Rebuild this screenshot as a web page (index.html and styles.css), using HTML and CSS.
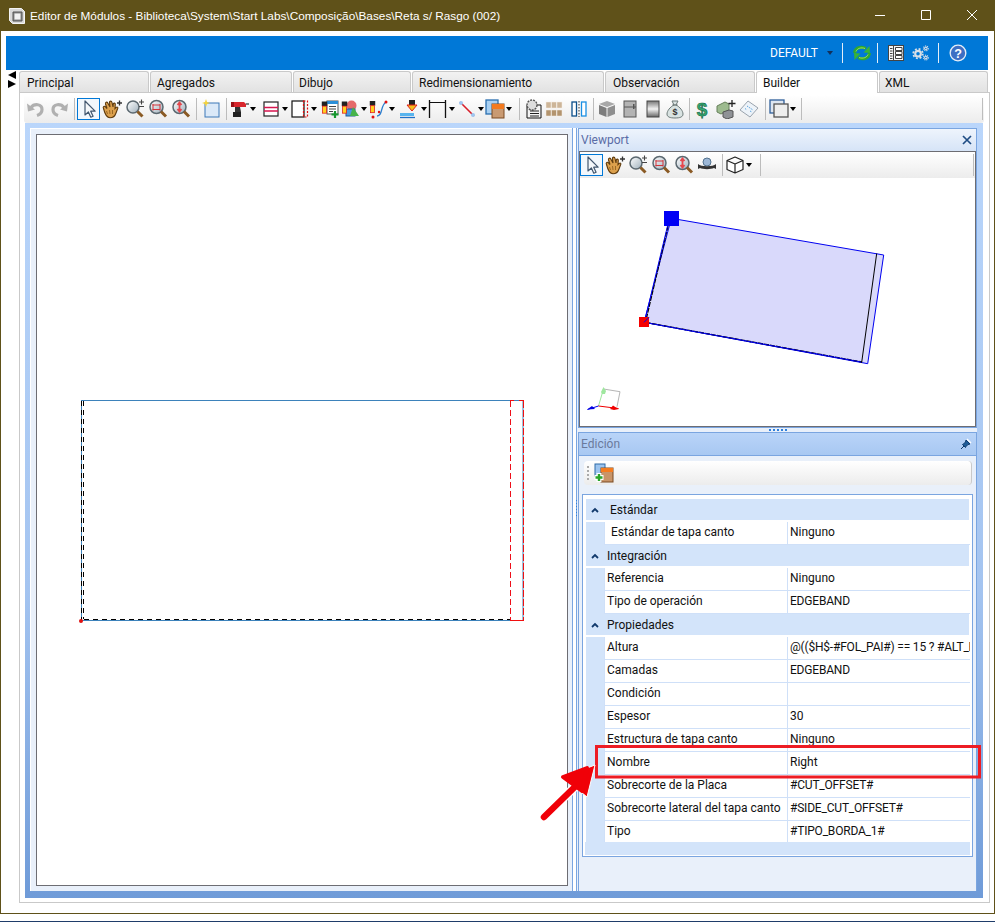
FILE: index.html
```html
<!DOCTYPE html>
<html lang="es">
<head>
<meta charset="utf-8">
<title>Editor de Módulos</title>
<link rel="stylesheet" href="styles.css">
</head>
<body>
<svg class="defs" width="0" height="0">
  <defs>
    <linearGradient id="lens" x1="0" y1="0" x2="1" y2="1"><stop offset="0" stop-color="#fff"/><stop offset="1" stop-color="#9fb0bc"/></linearGradient>
    <symbol id="cursor" viewBox="0 0 20 20"><path d="M6 2v14l3.400-3 2.400 5.200 2.300-1-2.400-5h4.400z" fill="#f4f7fa" stroke="#41566e" stroke-width="1.200" stroke-linejoin="round"/></symbol>
    <symbol id="hand" viewBox="0 0 20 20"><path d="M1.500 9.500c-1-2 1-3 2-1.500l1.500 1.500-1.500-4.500c-.5-2 1.500-2.500 2.300-1L8 8 7.500 3.500c0-1.800 2.200-1.800 2.500 0L11 8l.3-3c.3-1.500 2.200-1 2 .5l-.3 4 1-1c1.500-1 2.500 0 1.500 1.500l-1.500 4c-1 3-3 4.800-6 4.800-3.500 0-5-3.300-6.500-9.300z" fill="#dca04c" stroke="#5e3a0c" stroke-width="1.100"/><path d="M4.500 12l1 3M7.500 11l.5 4M10.500 11l0 4" stroke="#8a5a1c" stroke-width=".8"/><path d="M15 4h5M17.500 1.500v5" stroke="#333" stroke-width="1.300"/></symbol>
    <symbol id="zplus" viewBox="0 0 20 20"><circle cx="8" cy="8" r="6" fill="url(#lens)" stroke="#5b6870" stroke-width="1.500"/><path d="M12.500 12.500l5 5" stroke="#8a5a24" stroke-width="3"/><path d="M14 3h5M16.500.5v5M14 7.500h5" stroke="#444" stroke-width="1.100"/></symbol>
    <symbol id="zwin" viewBox="0 0 20 20"><circle cx="8.500" cy="8" r="6.500" fill="url(#lens)" stroke="#5b6870" stroke-width="1.500"/><path d="M13 12.500l5 5" stroke="#8a5a24" stroke-width="3"/><path d="M4.500 6h7.500M4.500 10.500h7.500M5 5v6.500M12 5v6.500" stroke="#d2353a" stroke-width="1"/></symbol>
    <symbol id="zext" viewBox="0 0 20 20"><circle cx="8.500" cy="8" r="6.500" fill="url(#lens)" stroke="#5b6870" stroke-width="1.500"/><path d="M13 12.500l5 5" stroke="#8a5a24" stroke-width="3"/><path d="M8.500 3.500v9M6.500 6l2-2.500 2 2.500M6.500 10l2 2.500 2-2.500" fill="none" stroke="#e5484d" stroke-width="1.800"/></symbol>
    <symbol id="undo" viewBox="0 0 20 20"><path d="M5 8.500c3-4 11-4 11 2 0 3-2 5-5 6" fill="none" stroke="#b0b0b0" stroke-width="3.200"/><path d="M1 4.500l1 8 7-2z" fill="#b0b0b0"/></symbol>
    <symbol id="orbit" viewBox="0 0 20 20"><circle cx="10" cy="7" r="4" fill="#9cb7d6" stroke="#53728f"/><path d="M1 9c3 3 15 3 18 0v5l-2-1c-3 1.500-11 1.500-14 0l-2 1z" fill="#333"/></symbol>
    <symbol id="cube" viewBox="0 0 20 20"><path d="M10 2l8 3.500v9L10 18l-8-3.500v-9zM2 5.500L10 9l8-3.500M10 9v9" fill="#fff" stroke="#222" stroke-width="1.200" stroke-linejoin="round"/></symbol>
    <symbol id="head" viewBox="0 0 9 18"><rect x="1" y="0" width="7" height="6" fill="#222"/><rect x="2" y="6" width="5" height="9" fill="#ffd21f" stroke="#e21b1b"/></symbol>
    <symbol id="addwin" viewBox="0 0 20 20"><rect x="1" y="1" width="10" height="12" fill="#9cc4ef" stroke="#2d6aa8"/><rect x="7" y="5" width="12" height="14" fill="#c89468" stroke="#7a4a22"/><rect x="7" y="5" width="12" height="4" fill="#f47c20"/><path d="M5 10v9M.500 14.500h9" stroke="#fff" stroke-width="5"/><path d="M5 11v7M1.500 14.500h7" stroke="#2aa52a" stroke-width="2.400"/></symbol>
  </defs>
</svg>

<div class="win">
  <header class="titlebar">
    <svg class="appicon" viewBox="0 0 16 16"><path d="M.5.500h12l3 3v12h-12l-3-3z" fill="#d9d9d9" stroke="#f4f4f4"/><path d="M4 4h9v9H4z" fill="#8a8a8a" stroke="#555"/><path d="M5.500 5.500h6v6h-6z" fill="#f2f2f2"/></svg>
    <span class="title">Editor de Módulos - Biblioteca\System\Start Labs\Composição\Bases\Reta s/ Rasgo (002)</span>
    <div class="wincontrols">
      <svg class="wc" viewBox="0 0 46 31"><path d="M18 15.500h10" stroke="#fff"/></svg>
      <svg class="wc" viewBox="0 0 46 31"><path d="M18.500 10.500h9v9h-9z" fill="none" stroke="#fff"/></svg>
      <svg class="wc" viewBox="0 0 46 31"><path d="M18 10l10 10M28 10L18 20" stroke="#fff"/></svg>
    </div>
  </header>

  <div class="body">
    <div class="ribbon">
      <span class="profile">DEFAULT</span><span class="caret dark"></span>
      <span class="rsep first"></span>
      <svg class="ri refresh" viewBox="0 0 20 18"><path d="M2.500 9C3 4 9 1.500 14 4.500" fill="none" stroke="#2fa82f" stroke-width="3"/><path d="M11.500 8.500L18 9l-.5-7z" fill="#37b437"/><path d="M17.500 9c-.5 5-6.500 7.500-11.500 4.500" fill="none" stroke="#2fa82f" stroke-width="3"/><path d="M8.500 9.500L2 9l.5 7z" fill="#37b437"/><path d="M4 7.500C5 4.500 9 3 13 4.500M16 10.500c-1 3-5 4.500-9 3" fill="none" stroke="#b9ec6a" stroke-width=".8"/></svg>
      <span class="rsep"></span>
      <svg class="ri list" viewBox="0 0 16 16"><rect x=".5" y=".5" width="15" height="15" fill="#f6f6f6" stroke="#444"/><path d="M5.500 1v14" stroke="#444"/><path d="M7.500 2.500h6.500v3H7.500zM7.500 6.500h6.500v3H7.500zM7.500 10.500h6.500v3H7.500z" fill="#fff" stroke="#444"/><path d="M2 3.500h2.500M2 6h2.500M2 8.500h2.500M2 11h2.500M2 13.500h2.500" stroke="#444"/></svg>
      <svg class="ri gear" viewBox="0 0 24 22"><g fill="none" stroke="#d9dfe7"><circle cx="8.500" cy="12" r="4" stroke-width="3"/><circle cx="8.500" cy="12" r="6.800" stroke-width="2.400" stroke-dasharray="2.700 2.650"/><circle cx="19.500" cy="4.500" r="1.800" stroke-width="1.500"/><circle cx="19.500" cy="4.500" r="3.400" stroke-width="1.500" stroke-dasharray="1.500 1.170"/><circle cx="19.500" cy="17.500" r="1.800" stroke-width="1.500"/><circle cx="19.500" cy="17.500" r="3.400" stroke-width="1.500" stroke-dasharray="1.500 1.170"/></g></svg>
      <span class="rsep"></span>
      <svg class="ri help" viewBox="0 0 20 20"><circle cx="10" cy="10" r="8.700" fill="#3d6fc4" stroke="#e6eef8" stroke-width="1.500"/><text x="10" y="15" class="qm">?</text></svg>
    </div>

    <div class="tabrow">
      <div class="tabnav"><span class="tri left"></span><span class="tri right"></span></div>
      <div class="tab t1">Principal</div>
      <div class="tab t2">Agregados</div>
      <div class="tab t3">Dibujo</div>
      <div class="tab t4">Redimensionamiento</div>
      <div class="tab t5">Observación</div>
      <div class="tab t6 active">Builder</div>
      <div class="tab t7">XML</div>
    </div>

    <div class="panel">
      <div class="toolbar main">
        <span class="b"><svg class="i"><use href="#undo"/></svg></span>
        <span class="b"><svg class="i flip"><use href="#undo"/></svg></span>
        <span class="sep s3"></span>
        <span class="b sel"><svg class="i"><use href="#cursor"/></svg></span>
        <span class="b"><svg class="i"><use href="#hand"/></svg></span>
        <span class="b"><svg class="i"><use href="#zplus"/></svg></span>
        <span class="b"><svg class="i"><use href="#zwin"/></svg></span>
        <span class="b"><svg class="i"><use href="#zext"/></svg></span>
        <span class="sep s3"></span>
        <span class="b"><svg class="i" viewBox="0 0 20 20"><rect x="4" y="4" width="14" height="14" fill="#dbe9f8" stroke="#3d78b8"/><path d="M5 0l1 3 3 1-3 1-1 3-1-3-3-1 3-1z" fill="#f5d33b"/></svg></span>
        <span class="sep s3"></span>

        <span class="d w32"><svg class="i" viewBox="0 0 20 20"><path d="M2 3h13l2 2v3H2z" fill="#d8262c"/><path d="M6 8h5l1 5H6z" fill="#333"/><rect x="4" y="13" width="8" height="5" fill="#222"/><path d="M17 5h3" stroke="#555" stroke-width="1.500"/><rect x="2" y="3" width="3" height="5" fill="#9a1015"/></svg><span class="caret"></span></span>
        <span class="d w29"><svg class="i" viewBox="0 0 20 20"><rect x="3" y="3" width="14" height="14" fill="#fff" stroke="#222" stroke-width="1.200"/><path d="M3 8.500h14M3 12h14" stroke="#d8164f" stroke-width="1.300"/></svg><span class="caret"></span></span>
        <span class="d w30"><svg class="i" viewBox="0 0 20 20"><rect x="2" y="2" width="12" height="16" fill="#fff" stroke="#111" stroke-width="1.200"/><rect x="13.500" y="2" width="4" height="16" fill="none" stroke="#e01010" stroke-width="1.200" stroke-dasharray="2 1.500"/></svg><span class="caret"></span></span>
        <span class="d w20"><svg class="i" viewBox="0 0 20 20"><rect x="7" y="2" width="11" height="13" fill="#fff" stroke="#555"/><rect x="7" y="2" width="11" height="3" fill="#2b8fd8"/><path d="M9 7.500h7M9 10h7M9 12.500h4" stroke="#444"/><use href="#head" x="1" y="1" width="7" height="17"/><path d="M15 12v7M11.500 15.500h7" stroke="#17982f" stroke-width="2.200"/></svg></span>
        <span class="d w28"><svg class="i" viewBox="0 0 20 20"><circle cx="11.500" cy="6.500" r="5" fill="#e56a6a"/><rect x="6" y="10" width="9" height="7" fill="#4a9be0" stroke="#1d5d9c"/><path d="M13 8l6 9h-9z" fill="#46b34a"/><use href="#head" x="1" y="1" width="7" height="17"/></svg><span class="caret"></span></span>
        <span class="d w32"><svg class="i" viewBox="0 0 20 20"><path d="M9 17c6 0 3-10 9-14" fill="none" stroke="#2a7fd0" stroke-width="1.300"/><circle cx="18" cy="3" r="1.500" fill="#e01010"/><circle cx="11" cy="13" r="1.200" fill="#e01010"/><circle cx="5" cy="18" r="1.500" fill="#e01010"/><use href="#head" x="1" y="1" width="7" height="16"/></svg><span class="caret"></span></span>
        <span class="d w28"><svg class="i" viewBox="0 0 20 20"><rect x="0" y="14" width="14" height="3" fill="#57b4ee"/><path d="M0 18.500h15" stroke="#1e70c8" stroke-width="1.300"/><rect x="9" y="1" width="6" height="5" fill="#222"/><path d="M7 6h10l-5 6z" fill="#f3c11c" stroke="#e21b1b"/></svg><span class="caret"></span></span>
        <span class="d w29"><svg class="i" viewBox="0 0 20 20"><path d="M1.500 1v18M17.500 1v18" stroke="#111" stroke-width="1.300"/><path d="M1.500 3.500h16" stroke="#111"/></svg><span class="caret"></span></span>
        <span class="d w28"><svg class="i" viewBox="0 0 20 20"><path d="M3 3l14 14" stroke="#d81e2a" stroke-width="1.600"/><circle cx="4" cy="4" r="2" fill="#9fc6f0"/><circle cx="16" cy="16" r="2" fill="#9fc6f0"/></svg><span class="caret"></span></span>
        <span class="d w28"><svg class="i" viewBox="0 0 20 20"><rect x="1" y="1" width="12" height="14" fill="#a9d0f2" stroke="#2a6fb0" stroke-width="1.300"/><rect x="7" y="5" width="12" height="14" fill="#c99a72" stroke="#7a4a22"/><rect x="7" y="5" width="12" height="5" fill="#f37a1f"/></svg><span class="caret"></span></span>
        <span class="sep s6"></span>

        <span class="p w21"><svg class="i" viewBox="0 0 20 20"><path d="M4 6h14v13H4z" fill="#f4f4f4" stroke="#111"/><circle cx="9" cy="6" r="5" fill="#ddd" stroke="#555" stroke-width="1.400" stroke-dasharray="2 1"/><path d="M7 12h9M7 14.500h9M7 17h9" stroke="#222"/></svg></span>
        <span class="p w25"><svg class="i" viewBox="0 0 20 20"><g fill="#cdb598" stroke="#f5efe6" stroke-width=".5"><rect x="2" y="3" width="5" height="6"/><rect x="7.500" y="3" width="5" height="6"/><rect x="13" y="3" width="5" height="6"/></g><g fill="#b3946e" stroke="#f5efe6" stroke-width=".5"><rect x="2" y="11" width="5" height="6"/><rect x="7.500" y="11" width="5" height="6"/><rect x="13" y="11" width="5" height="6"/></g></svg></span>
        <span class="p w20"><svg class="i" viewBox="0 0 20 20"><rect x="3" y="3" width="4.500" height="14" fill="#fff" stroke="#0c4f8a" stroke-width="1.300"/><rect x="12.500" y="3" width="4.500" height="14" fill="#fff" stroke="#1a8fe3" stroke-width="1.300"/><path d="M10 2v16" stroke="#333" stroke-dasharray="1.500 1.500"/></svg></span>
        <span class="sep s5"></span>

        <span class="p w23"><svg class="i" viewBox="0 0 20 20"><path d="M10 2l8 3-8 3-8-3z" fill="#a8a8a8"/><path d="M2 6l7.500 3v9L2 15z" fill="#7d7d7d"/><path d="M18 6l-7.500 3v9l7.500-3z" fill="#8f8f8f"/></svg></span>
        <span class="p w23"><svg class="i" viewBox="0 0 20 20"><rect x="4" y="2" width="12" height="16" fill="#b3b3b3" stroke="#555"/><path d="M4 8h12" stroke="#555"/><rect x="13" y="5" width="1.500" height="5" fill="#555"/></svg></span>
        <span class="p w22"><svg class="i" viewBox="0 0 20 20"><defs><linearGradient id="cyl" x1="0" y1="0" x2="0" y2="1"><stop offset="0" stop-color="#777"/><stop offset=".5" stop-color="#f2f2f2"/><stop offset="1" stop-color="#666"/></linearGradient></defs><rect x="4" y="2" width="12" height="16" fill="url(#cyl)" stroke="#444"/></svg></span>
        <span class="p w20"><svg class="i" viewBox="0 0 20 20"><path d="M7 2h6l-2 4c4 2 7 6 7 9 0 3-3 4-8 4s-8-1-8-4c0-3 3-7 7-9z" fill="#d9e3e2" stroke="#6d7a79"/><path d="M7.500 6h5" stroke="#6d7a79" stroke-width="1.400"/><text x="10" y="16" class="bag">$</text></svg></span>
        <span class="sep s3"></span>

        <span class="p w24"><svg class="i" viewBox="0 0 20 20"><text x="10" y="16.500" class="money">$</text></svg></span>
        <span class="p w23"><svg class="i" viewBox="0 0 20 20"><path d="M1 7l8-4 4 2v6l-8 4-4-2z" fill="#9dbb8f" stroke="#66805a"/><path d="M7 13l6-2 4 1v6l-6 2-4-2z" fill="#8f9296" stroke="#555"/><path d="M16 1v7M12.500 4.500h7" stroke="#222" stroke-width="1.300"/></svg></span>
        <span class="p w20"><svg class="i" viewBox="0 0 20 20"><path d="M9 2l10 7-8 9L1 11z" fill="#edf3f9" stroke="#9aa3ad"/><path d="M8 7l6 4M6 9.500l2 1.500M11 12l2 1" stroke="#5ba3dd" stroke-dasharray="1.500 1"/></svg></span>
        <span class="sep s6"></span>

        <span class="d w30b"><svg class="i" viewBox="0 0 20 20"><rect x="1" y="1" width="14" height="13" fill="#dde6f1" stroke="#2f5f9a" stroke-width="1.300"/><rect x="5" y="5" width="14" height="13" fill="#eee" stroke="#555" stroke-width="1.300"/></svg><span class="caret"></span></span>
        <span class="sep s3"></span>
        <span class="grow"></span>
        <span class="endgrip"></span>
      </div>

      <div class="frame">
        <div class="inner">
          <div class="canvas">
            <svg class="drawing" viewBox="37 135 530 750">
              <rect x="81.500" y="400.500" width="441.500" height="220" fill="none" stroke="#3d82bb"/>
              <path d="M81.500 401v219M83.500 401v218M84 619.500h426" fill="none" stroke="#000" stroke-dasharray="5 4"/>
              <path d="M510.500 401v219" stroke="#ee0f1a" stroke-dasharray="6 3"/>
              <path d="M510 400.500h4M519 400.500h5M510 620.500h14" stroke="#f01010"/>
              <path d="M523.500 401v219" stroke="#f01010" stroke-dasharray="7 2"/>
              <circle cx="81" cy="621" r="2" fill="#e01010"/>
            </svg>
          </div>
          <div class="split">
            <svg class="gripv" viewBox="0 0 3 18"><path d="M1.500 0v18" stroke="#2f80dc" stroke-dasharray="1 2"/></svg>
          </div>
          <div class="side">
            <section class="vp">
              <div class="dockhead pale"><span>Viewport</span><svg class="closex" viewBox="0 0 10 10"><path d="M1 1l8 8M9 1L1 9" stroke="#1f4d84" stroke-width="1.700"/></svg></div>
              <div class="vpbody">
                <div class="toolbar vpbar">
                  <span class="b sel"><svg class="i"><use href="#cursor"/></svg></span>
                  <span class="b"><svg class="i"><use href="#hand"/></svg></span>
                  <span class="b"><svg class="i"><use href="#zplus"/></svg></span>
                  <span class="b"><svg class="i"><use href="#zwin"/></svg></span>
                  <span class="b"><svg class="i"><use href="#zext"/></svg></span>
                  <span class="b"><svg class="i"><use href="#orbit"/></svg></span>
                  <span class="sep s3"></span>
                  <span class="d w30c"><svg class="i"><use href="#cube"/></svg><span class="caret"></span></span>
                  <span class="sep s3"></span>
                  <span class="grow"></span>
                  <span class="endgrip"></span>
                </div>
                <svg class="scene" viewBox="580 178 396 247">
                  <path d="M671.300 218.300L883.700 255 867.700 363.700 644 322.300z" fill="#d9d9fb" stroke="#0000f0"/>
                  <path d="M876.700 253.500L861.700 362.300" stroke="#000" stroke-width="1"/>
                  <path d="M668 226l-22 94M646 322.500l216 39.500" stroke="#000" stroke-width="1.300" stroke-dasharray="5 1"/>
                  <path d="M667.500 226l-23 96M644 322.300L861 362" stroke="#0000f0" fill="none"/>
                  <rect x="664" y="211" width="15" height="15" fill="#0000f5"/>
                  <rect x="639" y="317" width="10" height="10" fill="#f50000"/>
                  <path d="M644 322.300l5-5" stroke="#0000f0"/>
                  <path d="M603.500 389l16.500 2.700-3 15" fill="none" stroke="#b5b5b5"/>
                  <path d="M598.500 406l5-17" stroke="#9fe79f"/>
                  <path d="M598.500 406l20 2.500" stroke="#f00000"/>
                  <path d="M598.500 406l-11 3.500" stroke="#0000f0"/>
                  <path d="M601 392l2.500-5 2.500 4-1 3h-3z" fill="#9fe79f"/>
                  <path d="M610 409l3-3.500 3 2 3 1.500-5 1z" fill="#f00000"/>
                  <path d="M587 409.500l5-3.500 3 3z" fill="#0000e0"/>
                </svg>
              </div>
            </section>
            <div class="hsplit"><span class="griph"></span></div>
            <section class="edit">
              <div class="dockhead strong"><span>Edición</span>
                <svg class="pin" viewBox="0 0 12 12"><path d="M6 2l4 4-2 .5-2 2-.5 1L2.500 6.500l1-.5 2-2zM4 8l-3 3" fill="#1f5c98" stroke="#0d3a6c"/><path d="M7 1l4 4" stroke="#fff" stroke-width="1.200"/></svg>
              </div>
              <div class="toolbar edbar">
                <span class="griptb"></span>
                <span class="b"><svg class="i"><use href="#addwin"/></svg></span>
              </div>
              <div class="grid">
                <div class="group">
                  <div class="secrow"><span class="chev"><svg viewBox="0 0 8 6"><path d="M1 5l3-3 3 3" fill="none" stroke="#123a6c" stroke-width="1.800"/></svg></span><span class="sectitle wide">Estándar</span></div>
                  <div class="row"><span class="gut"></span><span class="k wide">Estándar de tapa canto</span><span class="v">Ninguno</span></div>
                </div>
                <div class="group">
                  <div class="secrow"><span class="chev"><svg viewBox="0 0 8 6"><path d="M1 5l3-3 3 3" fill="none" stroke="#123a6c" stroke-width="1.800"/></svg></span><span class="sectitle">Integración</span></div>
                  <div class="row"><span class="gut"></span><span class="k">Referencia</span><span class="v">Ninguno</span></div>
                  <div class="row"><span class="gut"></span><span class="k">Tipo de operación</span><span class="v caps">EDGEBAND</span></div>
                </div>
                <div class="group">
                  <div class="secrow"><span class="chev"><svg viewBox="0 0 8 6"><path d="M1 5l3-3 3 3" fill="none" stroke="#123a6c" stroke-width="1.800"/></svg></span><span class="sectitle">Propiedades</span></div>
                  <div class="row"><span class="gut"></span><span class="k">Altura</span><span class="v caps">@(($H$-#FOL_PAI#) == 15 ? #ALT_F</span></div>
                  <div class="row"><span class="gut"></span><span class="k">Camadas</span><span class="v caps">EDGEBAND</span></div>
                  <div class="row"><span class="gut"></span><span class="k">Condición</span><span class="v"></span></div>
                  <div class="row"><span class="gut"></span><span class="k">Espesor</span><span class="v">30</span></div>
                  <div class="row"><span class="gut"></span><span class="k">Estructura de tapa canto</span><span class="v">Ninguno</span></div>
                  <div class="row"><span class="gut"></span><span class="k">Nombre</span><span class="v">Right</span></div>
                  <div class="row"><span class="gut"></span><span class="k">Sobrecorte de la Placa</span><span class="v caps">#CUT_OFFSET#</span></div>
                  <div class="row"><span class="gut"></span><span class="k">Sobrecorte lateral del tapa canto</span><span class="v caps">#SIDE_CUT_OFFSET#</span></div>
                  <div class="row"><span class="gut"></span><span class="k">Tipo</span><span class="v caps">#TIPO_BORDA_1#</span></div>
                </div>
                <div class="gridfoot"></div>
              </div>
            </section>
          </div>
        </div>
      </div>
    </div>
  </div>

  <svg class="callout" viewBox="0 0 995 922">
    <rect x="596.500" y="746.500" width="383" height="30.500" fill="none" stroke="#ed1c24" stroke-width="3"/>
    <path d="M544 817l44-43" stroke="#fff" stroke-width="9" stroke-linecap="round"/>
    <path d="M563 777l32-12-8 32z" fill="#f00008" stroke="#fff" stroke-width="1"/>
    <path d="M544 817l42-41" stroke="#f00008" stroke-width="6.500" stroke-linecap="round"/>
    <path d="M563 777l24-9-5 23z" fill="#f00008" stroke="#f00008" stroke-width="4" stroke-linejoin="round"/>
  </svg>
</div>
<div class="desk"></div>
</body>
</html>
```

FILE: styles.css
```css
* { box-sizing: border-box; }
html, body { margin: 0; padding: 0; background: #fff; }
body { width: 995px; height: 922px; overflow: hidden; font: 12px Roboto, "Liberation Sans", Arial, sans-serif; color: #111; }
.defs { position: absolute; }

.win { position: relative; width: 995px; height: 914px; border: 1px solid #5f5119; border-width: 0 1px 1px; background: #fff; display: flex; flex-direction: column; }
.desk { height: 8px; border-bottom: 1px solid #1f3d6a; background: #fff; }

.titlebar { height: 31px; margin: 0 -1px; background: #5f5119; color: #fff; display: flex; align-items: center; padding-left: 9px; flex: none; }
.appicon { width: 16px; height: 16px; margin-right: 5px; }
.title { font: 11.8px "Liberation Sans", Arial, sans-serif; white-space: nowrap; }
.wincontrols { margin-left: auto; display: flex; }
.wc { width: 46px; height: 31px; display: block; }

.body { flex: 1; padding: 5px 0 0 5px; display: flex; flex-direction: column; min-height: 0; }
.ribbon { height: 34px; width: 982px; background: #0078d7; display: flex; align-items: center; padding-left: 764px; color: #fff; flex: none; }
.profile { width: 47px; font-size: 12px; white-space: nowrap; }
.caret { display: inline-block; width: 0; height: 0; border: solid transparent; border-width: 4px 3.5px 0; border-top-color: #000; margin-left: 1px; flex: none; }
.caret.dark { border-top-color: #12305a; margin-left: 10px; }
.rsep { width: 1px; height: 20px; background: #e4eef8; flex: none; }
.rsep.first { margin-left: 9px; }
.ri { flex: none; }
.ri.refresh { width: 20px; height: 18px; margin: 0 5px 0 9px; }
.ri.list { width: 16px; height: 16px; margin: 0 8px 0 10px; }
.ri.gear { width: 17px; height: 16px; margin-right: 9px; }
.ri.help { width: 18px; height: 18px; margin-left: 10px; }
.qm { font: bold 14px "Liberation Sans", sans-serif; fill: #fff; text-anchor: middle; }

.tabrow { height: 21px; margin-top: 1px; display: flex; flex: none; position: relative; z-index: 1; }
.tabnav { width: 13px; display: flex; flex-direction: column; padding: 0 0 0 2px; gap: 1px; }
.tri { width: 0; height: 0; border: solid transparent; border-width: 4px 0 4px 8px; }
.tri.right { border-left-color: #000; }
.tri.left { border-width: 4px 8px 4px 0; border-right-color: #000; }
.tab { height: 21px; background: linear-gradient(#f2f2f2, #e2e2e2); border: 1px solid #c9c9c9; border-bottom: 0; border-radius: 3px 3px 0 0; padding: 4px 0 0 7px; white-space: nowrap; margin-right: 1px; }
.tab.active { background: #fff; height: 22px; }
.t1 { width: 130px; } .t2 { width: 142px; padding-left: 6px; } .t3 { width: 118px; padding-left: 5px; } .t4 { width: 192px; padding-left: 6px; }
.t5 { width: 150px; } .t6 { width: 122px; padding-left: 6px; } .t7 { width: 109px; margin-right: 0; padding-left: 5px; }

.panel { margin-left: 13px; width: 971px; height: 811px; border: 1px solid #c9c9c9; padding: 2px 6px 4px 5px; display: flex; flex-direction: column; background: #fff; flex: none; }

.toolbar { display: flex; align-items: center; background: linear-gradient(#fff, #ececec); }
.main { height: 28px; flex: none; border-radius: 3px; margin-left: -1px; margin-right: -1px; }
.b { width: 23px; height: 22px; display: flex; align-items: center; justify-content: center; flex: none; }
.b.sel { border: 1px solid #0078d7; background: #f2f7fc; }
.i { width: 20px; height: 20px; display: block; flex: none; }
.flip { transform: scaleX(-1); }
.sep { width: 1px; height: 22px; background: #bcbcbc; flex: none; }
.s3 { margin: 0 2px 0 4px; }
.s5 { margin: 0 3px 0 4px; }
.s6 { margin: 0 3px 0 6px; }
.d, .p { display: flex; align-items: center; height: 22px; flex: none; }
.w20 { width: 20px; } .w21 { width: 21px; } .w22 { width: 22px; } .w23 { width: 23px; } .w24 { width: 24px; } .w25 { width: 25px; }
.w28 { width: 28px; } .w29 { width: 29px; } .w30 { width: 30px; } .w32 { width: 32px; } .w30b { width: 28px; } .w30c { width: 31px; }
.grow { flex: 1; }
.endgrip { width: 1px; height: 22px; background: #bdbdbd; margin-right: 1px; flex: none; }
.bag { font: bold 9px "Liberation Sans", sans-serif; fill: #333; text-anchor: middle; }
.money { font: bold 19px "Liberation Sans", sans-serif; fill: #35a873; stroke: #14653f; stroke-width: .6; text-anchor: middle; }

.frame { flex: 1; padding: 5px 6px 7px 5px; background: linear-gradient(#bad6fb, #a4c4f0 60%, #6f9bd8); min-height: 0; }
.inner { height: 100%; background: #e9f0fa; display: flex; box-shadow: inset 1px 1px 0 #fff; }
.canvas { width: 532px; margin: 6px 0 5px 6px; border: 1px solid #6d6d73; background: #fff; flex: none; }
.drawing { display: block; width: 530px; height: 750px; }
.split { width: 10px; flex: none; position: relative; }
.split::before { content: ""; position: absolute; left: 4px; top: 0; bottom: 0; width: 3px; background: #fff; border: solid #7aa5e0; border-width: 0 1px; }
.gripv { position: absolute; left: 7px; top: 372px; width: 3px; height: 18px; }
.side { width: 399px; display: flex; flex-direction: column; flex: none; }

.vp { height: 300px; border: 1px solid #7aa5e0; flex: none; display: flex; flex-direction: column; background: #e9f0fa; }
.dockhead { height: 22px; display: flex; align-items: center; justify-content: space-between; padding: 0 4px 0 2px; flex: none; color: #5a6ca6; font-size: 12px; }
.dockhead.pale { background: linear-gradient(#eef4fc, #d6e4f7); }
.dockhead.strong { background: linear-gradient(#b9d4f8, #a8c8f2); color: #6a7a9c; border-bottom: 1px solid #7aa5e0; height: 23px; }
.closex { width: 10px; height: 10px; }
.pin { width: 12px; height: 12px; }
.vpbody { flex: 1; border: 1px solid #6d6d73; background: #fff; display: flex; flex-direction: column; min-height: 0; }
.vpbar { height: 26px; flex: none; }
.scene { display: block; width: 396px; height: 247px; }

.hsplit { height: 4px; flex: none; display: flex; justify-content: center; }
.griph { width: 18px; height: 2px; margin-top: 1px; border-top: 2px dotted #2f80dc; }

.edit { flex: 1; border: solid #7aa5e0; border-width: 1px 1px 0; background: #e9f0fa; display: flex; flex-direction: column; min-height: 0; }
.edbar { height: 24px; margin: 5px 4px 0 5px; border-radius: 4px; flex: none; padding-left: 3px; border-right: 1px solid #c9c9c9; }
.griptb { width: 2px; height: 14px; margin-right: 3px; border-left: 2px dotted #aaa; }
.grid { height: 363px; margin: 9px 3px 0 3px; border: 1px solid #7aa5e0; background: #fff; padding: 4px 2px 1px 3px; display: flex; flex-direction: column; flex: none; }
.group { flex: none; }
.secrow { height: 23px; display: flex; align-items: center; background: #d3e4fa; border-bottom: 2px solid #fff; margin-right: 1px; }
.chev { width: 18px; display: flex; justify-content: center; flex: none; }
.chev svg { width: 8px; height: 6px; display: block; }
.sectitle { padding-left: 3px; }
.sectitle.wide, .k.wide { padding-left: 6px; }
.row { height: 23px; display: grid; grid-template-columns: 18px 183px 1fr; }
.gut { background: #d3e4fa; }
.k, .v { border-bottom: 1px solid #cfe0f8; border-left: 1px solid #cfe0f8; padding: 3px 0 0 2px; white-space: nowrap; overflow: hidden; }
.v.caps { letter-spacing: -.2px; }
.gridfoot { flex: 1; margin: -2px 0 0 -1px; background: #d3e4fa; position: relative; }

.callout { position: absolute; left: -1px; top: 0; width: 995px; height: 922px; pointer-events: none; }
```
